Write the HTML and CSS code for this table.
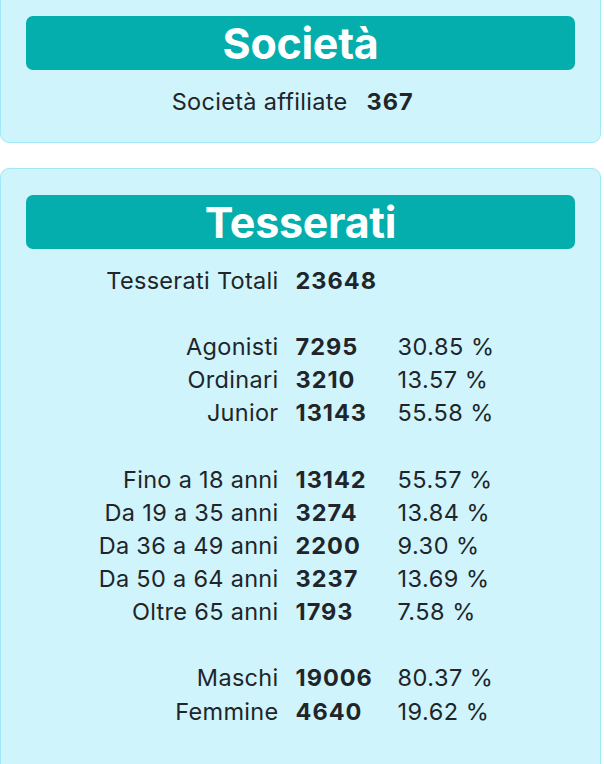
FILE: index.html
```html
<!DOCTYPE html>
<html lang="it">
<head>
<meta charset="utf-8">
<title>Statistiche</title>
<link rel="stylesheet" href="styles.css">
</head>
<body>
<div class="page">
  <section class="card card-first">
    <h2 class="card-title">Società</h2>
    <div class="stats stats-small">
      <div class="row"><span class="lbl">Società affiliate</span><span class="num">367</span><span class="pct"></span></div>
    </div>
  </section>
  <section class="card">
    <h2 class="card-title">Tesserati</h2>
    <div class="stats">
      <div class="row"><span class="lbl">Tesserati Totali</span><span class="num">23648</span><span class="pct"></span></div>
      <div class="row blank"></div>
      <div class="row"><span class="lbl">Agonisti</span><span class="num">7295</span><span class="pct">30.85 %</span></div>
      <div class="row"><span class="lbl">Ordinari</span><span class="num">3210</span><span class="pct">13.57 %</span></div>
      <div class="row"><span class="lbl">Junior</span><span class="num">13143</span><span class="pct">55.58 %</span></div>
      <div class="row blank"></div>
      <div class="row"><span class="lbl">Fino a 18 anni</span><span class="num">13142</span><span class="pct">55.57 %</span></div>
      <div class="row"><span class="lbl">Da 19 a 35 anni</span><span class="num">3274</span><span class="pct">13.84 %</span></div>
      <div class="row"><span class="lbl">Da 36 a 49 anni</span><span class="num">2200</span><span class="pct">9.30 %</span></div>
      <div class="row"><span class="lbl">Da 50 a 64 anni</span><span class="num">3237</span><span class="pct">13.69 %</span></div>
      <div class="row"><span class="lbl">Oltre 65 anni</span><span class="num">1793</span><span class="pct">7.58 %</span></div>
      <div class="row blank"></div>
      <div class="row"><span class="lbl">Maschi</span><span class="num">19006</span><span class="pct">80.37 %</span></div>
      <div class="row"><span class="lbl">Femmine</span><span class="num">4640</span><span class="pct">19.62 %</span></div>
    </div>
  </section>
</div>
</body>
</html>
```
FILE: styles.css
```css
html, body {
  margin: 0;
  padding: 0;
  background: #ffffff;
}
body {
  font-family: Inter, "Noto Sans", "Liberation Sans", sans-serif;
  color: #212529;
  overflow: hidden;
}
.page {
  width: 601px;
  margin-top: -11px;
  display: flex;
  flex-direction: column;
  gap: 25.6px;
}
.card {
  background: #cff4fc;
  border: 1px solid #9eeaf9;
  border-radius: 9px;
  padding: 26px 25px 24px 25px;
}
.card:last-child {
  padding-bottom: 60px;
}
.card-title {
  margin: 0;
  height: 54px;
  background: #04aeac;
  border-radius: 7px;
  color: #ffffff;
  font-size: 43px;
  font-weight: 700;
  line-height: 54px;
  text-align: center;
  letter-spacing: -0.3px;
}
.stats {
  margin-top: 14.5px;
  display: grid;
  grid-template-columns: 192px 102px 116px;
  justify-content: center;
  font-size: 23.5px;
}
.stats-small {
  grid-template-columns: 190px 67px 11px;
}
.stats-small .num {
  padding-left: 10px;
}
.row {
  display: contents;
}
.row > span {
  height: 33.15px;
  line-height: 33.15px;
  white-space: nowrap;
}
.row.blank::before {
  content: "";
  grid-column: 1 / -1;
  height: 33.15px;
}
.lbl {
  text-align: right;
  padding-right: 9px;
  letter-spacing: 0.3px;
}
.num {
  font-weight: 700;
  padding-left: 8px;
  letter-spacing: 1px;
}
.pct {
  padding-left: 8px;
  letter-spacing: 0.5px;
}
```
